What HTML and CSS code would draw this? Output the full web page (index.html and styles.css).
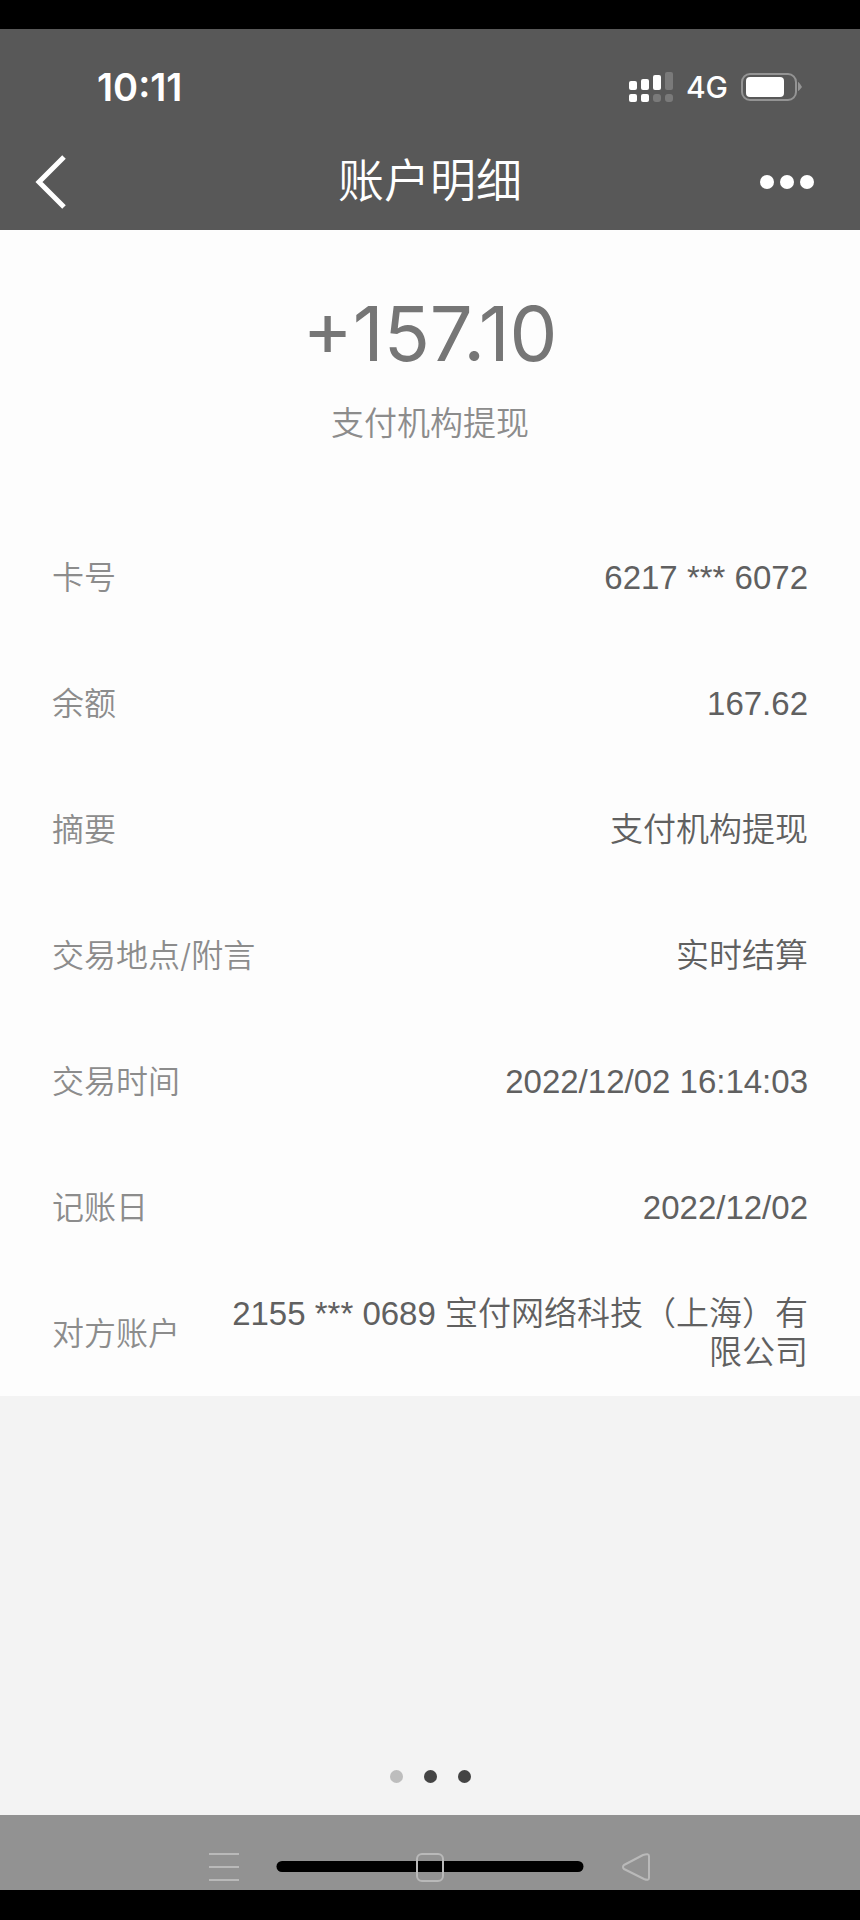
FILE: index.html
```html
<!DOCTYPE html>
<html lang="zh-CN">
<head>
<meta charset="utf-8">
<meta name="viewport" content="width=device-width, initial-scale=1">
<title>账户明细</title>
<link rel="stylesheet" href="styles.css">
</head>
<body>
<div class="screen">
  <header class="header">
    <div class="status">
      <time class="status-time">10:11</time>
      <div class="status-right">
        <svg class="signal" width="44" height="30" viewBox="0 0 44 30" aria-hidden="true">
          <g fill="#fff">
            <rect x="0" y="9" width="8" height="9" rx="2"/>
            <rect x="12" y="7" width="8" height="11" rx="2"/>
            <rect x="24" y="3" width="8" height="15" rx="2"/>
            <rect x="0" y="22" width="8" height="8" rx="2"/>
            <rect x="12" y="22" width="8" height="8" rx="2"/>
          </g>
          <g fill="#7a7a7a">
            <rect x="36" y="0" width="8" height="18" rx="2"/>
            <rect x="24" y="22" width="8" height="8" rx="3"/>
            <rect x="36" y="22" width="8" height="8" rx="3"/>
          </g>
        </svg>
        <span class="network">4G</span>
        <svg class="battery" width="62" height="30" viewBox="0 0 62 30" aria-hidden="true">
          <rect x="1" y="2" width="54" height="26" rx="8" fill="none" stroke="#949494" stroke-width="2"/>
          <rect x="5" y="5" width="38" height="20" rx="4" fill="#fff"/>
          <path d="M57 10q1 0 4 5q-3 4-4 4z" fill="#949494"/>
        </svg>
      </div>
    </div>
    <div class="titlebar">
      <button class="icon-button" type="button" aria-label="返回">
        <svg width="34" height="56" viewBox="0 0 34 56" aria-hidden="true">
          <path d="M30 3L5 28L30 53" fill="none" stroke="#fff" stroke-width="5"/>
        </svg>
      </button>
      <h1 class="title">账户明细</h1>
      <button class="icon-button icon-button-end" type="button" aria-label="更多">
        <svg width="54" height="14" viewBox="0 0 54 14" aria-hidden="true">
          <g fill="#fff"><circle cx="7" cy="7" r="7"/><circle cx="27" cy="7" r="7"/><circle cx="47" cy="7" r="7"/></g>
        </svg>
      </button>
    </div>
  </header>
  <main class="main">
    <section class="card">
      <div class="summary">
        <p class="amount">+157.10</p>
        <p class="kind">支付机构提现</p>
      </div>
      <dl class="details">
        <div class="row"><dt>卡号</dt><dd>6217 *** 6072</dd></div>
        <div class="row"><dt>余额</dt><dd>167.62</dd></div>
        <div class="row"><dt>摘要</dt><dd>支付机构提现</dd></div>
        <div class="row"><dt>交易地点/附言</dt><dd>实时结算</dd></div>
        <div class="row"><dt>交易时间</dt><dd>2022/12/02 16:14:03</dd></div>
        <div class="row"><dt>记账日</dt><dd>2022/12/02</dd></div>
        <div class="row"><dt>对方账户</dt><dd>2155 *** 0689 宝付网络科技（上海）有限公司</dd></div>
      </dl>
    </section>
    <div class="pager">
      <span class="dot dot-light"></span>
      <span class="dot"></span>
      <span class="dot"></span>
    </div>
  </main>
  <nav class="navbar">
    <span class="home-bar"></span>
    <button class="nav-button" type="button" aria-label="菜单">
      <svg width="30" height="30" viewBox="0 0 30 30" aria-hidden="true">
        <path d="M0 2H30M0 15H30M0 28H30" fill="none" stroke="#b9b9b9" stroke-width="2"/>
      </svg>
    </button>
    <button class="nav-button" type="button" aria-label="主页">
      <svg width="30" height="30" viewBox="0 0 30 30" aria-hidden="true">
        <rect x="2" y="2" width="26" height="27" rx="5" fill="none" stroke="#b9b9b9" stroke-width="2"/>
      </svg>
    </button>
    <button class="nav-button" type="button" aria-label="后退">
      <svg width="30" height="30" viewBox="0 0 30 30" aria-hidden="true">
        <path d="M3 13L22 3Q28 1 28 4V26Q28 29 23 27L3 17Q1 15 3 13Z" fill="none" stroke="#b9b9b9" stroke-width="2" stroke-linejoin="round"/>
      </svg>
    </button>
  </nav>
</div>
</body>
</html>
```
FILE: styles.css
```css
* {
  box-sizing: border-box;
}

body {
  margin: 0;
  background: #000;
  font-family: Inter, "Noto Sans CJK SC", sans-serif;
}

button {
  display: flex;
  padding: 0;
  border: 0;
  background: none;
}

.screen {
  display: flex;
  flex-direction: column;
  min-height: 100vh;
  padding: 29px 0 30px;
}

.header {
  padding: 28px 0 20px;
  background: #585858;
  color: #fff;
}

.status {
  display: flex;
  align-items: center;
  justify-content: space-between;
  height: 60px;
  padding: 0 57px 0 97px;
}

.status-time {
  font-size: 38px;
  font-weight: 600;
  line-height: 44px;
}

.status-right {
  display: flex;
  align-items: center;
}

.network {
  margin: 0 13px;
  font-size: 30px;
  font-weight: 500;
}

.titlebar {
  display: grid;
  grid-template-columns: 1fr auto 1fr;
  align-items: center;
  padding: 33px 34px 0;
}

.icon-button {
  padding-top: 4px;
}

.icon-button-end {
  justify-self: end;
  padding-right: 12px;
}

.title {
  margin: 0;
  font-size: 46px;
  font-weight: 350;
  line-height: 60px;
}

.main {
  display: flex;
  flex: 1;
  flex-direction: column;
  justify-content: space-between;
  background: #f3f3f3;
}

.card {
  background: #fdfdfd;
}

.summary {
  padding: 57px 52px 69px;
  text-align: center;
}

.amount {
  margin: 0;
  color: #767676;
  font-size: 76px;
  line-height: 92px;
}

.kind {
  margin: 22px 0 0;
  color: #8c8c8c;
  font-size: 33px;
  font-weight: 350;
  line-height: 44px;
}

.details {
  margin: 0;
  padding: 0 52px;
}

.row {
  display: flex;
  align-items: center;
  justify-content: space-between;
  gap: 28px;
  min-height: 126px;
  line-height: 39px;
}

.row dt {
  flex: none;
  color: #8c8c8c;
  font-size: 32px;
  font-weight: 350;
}

.row dd {
  margin: 0;
  color: #606060;
  font-family: "Liberation Sans", "Noto Sans CJK SC", sans-serif;
  font-size: 33px;
  font-weight: 350;
  text-align: right;
}

.pager {
  display: flex;
  justify-content: center;
  gap: 21px;
  padding: 32px;
}

.dot {
  width: 13px;
  height: 13px;
  border-radius: 50%;
  background: #444;
}

.dot-light {
  background: #bdbdbd;
}

.navbar {
  position: relative;
  display: flex;
  justify-content: center;
  gap: 176px;
  padding: 37px 0 8px;
  background: #929292;
}

.nav-button {
  position: relative;
}

.home-bar {
  position: absolute;
  bottom: 18px;
  left: 50%;
  width: 307px;
  height: 11px;
  border-radius: 6px;
  background: #000;
  transform: translateX(-50%);
}
```
